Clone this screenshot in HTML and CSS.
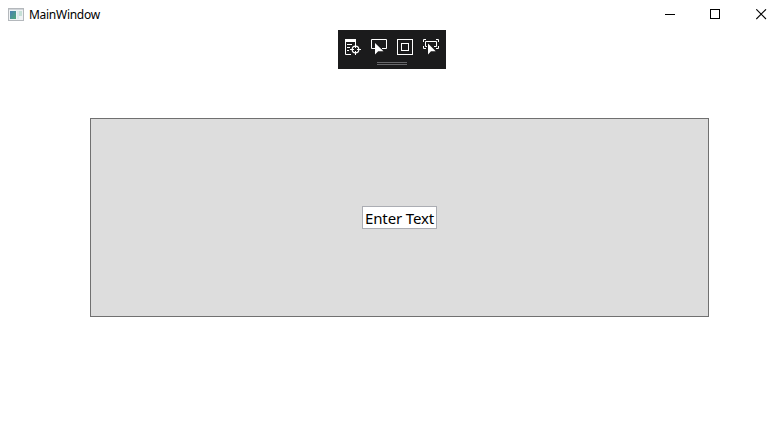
FILE: index.html
```html
<!DOCTYPE html>
<html lang="en">
<head>
<meta charset="utf-8">
<title>MainWindow</title>
<link rel="stylesheet" href="styles.css">
</head>
<body>
<div class="window">
  <header class="titlebar">
    <svg class="app-icon" width="16" height="14" viewBox="0 0 16 14">
      <defs><linearGradient id="pane" x1="0" y1="0" x2="1" y2="1"><stop offset="0" stop-color="#4a7fb5"/><stop offset="1" stop-color="#4fa878"/></linearGradient></defs>
      <rect x=".5" y=".5" width="15" height="12" fill="#f0f3f5" stroke="#b4b8bc"/>
      <path d="M1 1.5H15" stroke="#d0d4d8"/>
      <rect x="2" y="3" width="6" height="8" fill="url(#pane)"/>
      <rect x="9" y="3" width="2" height="8" fill="#dfe9ec"/>
      <rect x="11" y="3" width="3" height="5" fill="#c6e0d6"/>
    </svg>
    <span class="title">MainWindow</span>
    <div class="controls">
      <svg width="11" height="11" viewBox="0 0 11 11"><path d="M0 5.5H10" stroke="#000"/></svg>
      <svg width="11" height="11" viewBox="0 0 11 11"><rect x=".5" y=".5" width="9" height="9" fill="none" stroke="#000"/></svg>
      <svg class="close" width="11" height="11" viewBox="0 0 11 11"><path d="M.3 .3L10 10M10 .3L.3 10" stroke="#000" stroke-width="1.1"/></svg>
    </div>
  </header>
  <div class="toolbar">
    <div class="tools">
      <svg width="16" height="16" viewBox="0 0 16 16" fill="none" stroke="#fff">
        <path d="M0 0H11V3H0Z" fill="#fff" stroke="none"/>
        <path d="M.5 3V15.5H6M10.5 3V5M2 5.5H7M2 8.5H5M2 11.5H4"/>
        <circle cx="10.5" cy="10.5" r="3.3" stroke-width="1.2"/>
        <path d="M10.5 5V9M10.5 12V16M5 10.5H9M12 10.5H16"/>
      </svg>
      <svg width="16" height="16" viewBox="0 0 16 16">
        <path d="M4 9.5H.5V.5H15.5V9.5H11" fill="none" stroke="#fff"/>
        <path d="M4 4V15.5L7.2 12.3H12.5Z" fill="#fff"/>
      </svg>
      <svg width="16" height="16" viewBox="0 0 16 16" fill="none" stroke="#fff">
        <rect x=".5" y=".5" width="15" height="15"/><rect x="4.5" y="4.5" width="7" height="7"/>
      </svg>
      <svg width="16" height="16" viewBox="0 0 16 16">
        <path d="M.5 3V.5H3M13 .5H15.5V3M.5 7V9.5H3M13 9.5H15.5V7M4 7.5H2.5V2.5H13.5V7.5H11" fill="none" stroke="#fff"/>
        <path d="M5 4.5V15.5L8 12.3H12.7Z" fill="#fff"/>
      </svg>
    </div>
    <div class="grip"></div>
  </div>
  <main class="panel">
    <div class="textbox">Enter Text</div>
  </main>
</div>
</body>
</html>
```

FILE: styles.css
```css
body {
  margin: 0;
  background: #fff;
}

.window {
  height: 439px;
  overflow: hidden;
  font-family: "Noto Sans", "Open Sans", sans-serif;
  color: #000;
}

.titlebar {
  display: flex;
  align-items: center;
  height: 30px;
  padding: 0 17px 0 8px;
  box-sizing: border-box;
}

.app-icon {
  margin-top: -1px;
}

.title {
  margin-left: 5px;
  font-size: 12px;
  line-height: 16px;
  letter-spacing: -0.28px;
}

.controls {
  display: flex;
  gap: 34px;
  margin-left: auto;
  margin-top: -1px;
}

.close {
  margin-left: 1px;
}

.toolbar {
  width: 108px;
  height: 39px;
  margin: 0 auto;
  padding: 9px 7px 0;
  box-sizing: border-box;
  background: #1b1b1c;
}

.tools {
  display: flex;
  gap: 10px;
}

.grip {
  width: 30px;
  height: 1px;
  margin: 7px auto 0;
  border: solid #68686b;
  border-width: 1px 0;
}

.panel {
  display: flex;
  align-items: center;
  justify-content: center;
  width: 619px;
  height: 199px;
  margin: 49px 0 0 90px;
  box-sizing: border-box;
  border: 1px solid #707070;
  background: #ddd;
}

.textbox {
  width: 75px;
  height: 23px;
  box-sizing: border-box;
  padding-left: 2px;
  border: 1px solid #abadb3;
  background: #fff;
  font-size: 15px;
  line-height: 22px;
  letter-spacing: -0.13px;
  white-space: nowrap;
}
```
